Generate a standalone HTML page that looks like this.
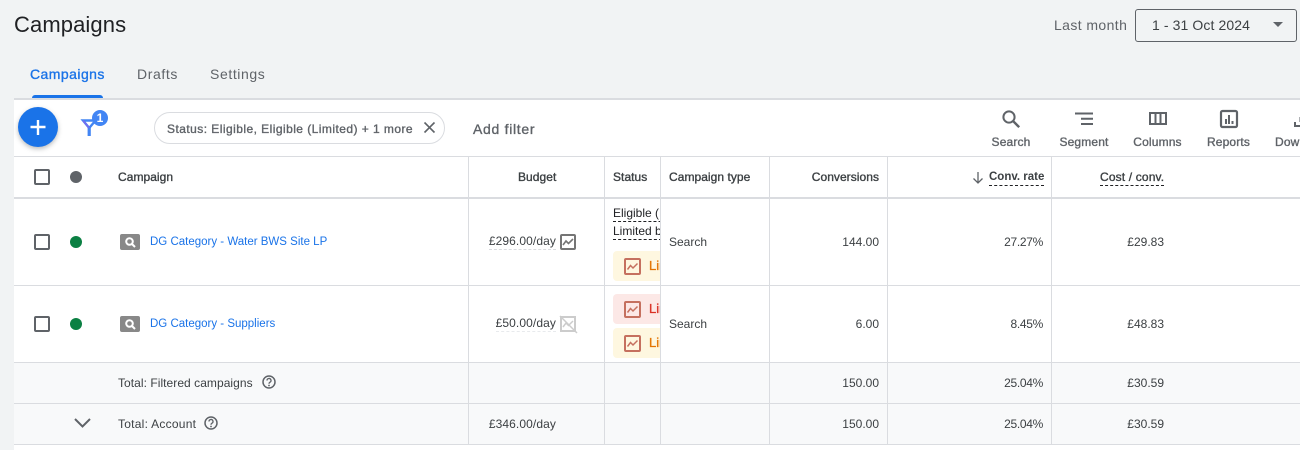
<!DOCTYPE html>
<html><head><meta charset="utf-8"><style>
html,body{margin:0;padding:0;width:1300px;height:450px;overflow:hidden;background:#f1f3f4;font-family:"Liberation Sans",sans-serif;color:#3c4043}
.t{position:absolute;white-space:nowrap;font-size:12px;line-height:16px}
.r{text-align:right}
.l{position:absolute;background:#dadce0}
.b{position:absolute}
svg{position:absolute;overflow:visible}
.cb{position:absolute;width:12px;height:12px;border:2px solid #5f6368;border-radius:2px;left:34px}
.dot{position:absolute;width:12px;height:12px;border-radius:50%;left:70px;background:#0b8043}
.h{-webkit-text-stroke:.35px #3c4043;color:#3c4043;letter-spacing:.05px}
.d{border-bottom:1px dashed #202124;line-height:15px}
.tb{color:#5f6368;transform:translateX(-50%);-webkit-text-stroke:.35px #5f6368;letter-spacing:.15px}
.p{letter-spacing:-.3px}
.m{letter-spacing:.1px}
</style></head><body>
<div class="t" style="left:14px;top:10px;font-size:22px;line-height:30px;color:#202124;letter-spacing:.1px">Campaigns</div>
<div class="t" style="left:30px;top:66px;font-size:14px;line-height:16px;color:#1a73e8;-webkit-text-stroke:.35px #1a73e8;letter-spacing:.45px">Campaigns</div>
<div class="t" style="left:137px;top:66px;font-size:14px;color:#5f6368;letter-spacing:.6px">Drafts</div>
<div class="t" style="left:210px;top:66px;font-size:14px;color:#5f6368;letter-spacing:.6px">Settings</div>
<div class="b" style="left:32px;top:95px;width:71px;height:3px;background:#1a73e8;border-radius:3px 3px 0 0"></div>
<div class="t" style="left:1054px;top:17px;font-size:14px;color:#5f6368;letter-spacing:.4px">Last month</div>
<div class="b" style="left:1135px;top:9px;width:160px;height:31px;border:1px solid #5f6368;border-radius:3px"></div>
<div class="t" style="left:1152px;top:17px;font-size:14px;color:#3c4043;letter-spacing:.1px">1 - 31 Oct 2024</div>
<svg style="left:1272px;top:22px" width="12" height="6"><path d="M1 0h10L6 5z" fill="#5f6368"/></svg>

<div class="b" style="left:14px;top:100px;width:1286px;height:350px;background:#fff"></div>
<div class="l" style="left:14px;top:98px;width:1286px;height:2px"></div>
<div class="l" style="left:14px;top:156px;width:1286px;height:1px"></div>
<div class="l" style="left:14px;top:197px;width:1286px;height:2px"></div>
<div class="b" style="left:14px;top:363px;width:1286px;height:81px;background:#f8f9fa"></div>
<div class="l" style="left:14px;top:285px;width:1286px;height:1px"></div>
<div class="l" style="left:14px;top:362px;width:1286px;height:1px"></div>
<div class="l" style="left:14px;top:403px;width:1286px;height:1px"></div>
<div class="l" style="left:14px;top:444px;width:1286px;height:1px"></div>
<div class="l" style="left:468px;top:157px;width:1px;height:288px"></div>
<div class="l" style="left:604px;top:157px;width:1px;height:288px"></div>
<div class="l" style="left:660px;top:157px;width:1px;height:288px"></div>
<div class="l" style="left:769px;top:157px;width:1px;height:288px"></div>
<div class="l" style="left:887px;top:157px;width:1px;height:288px"></div>
<div class="l" style="left:1051px;top:157px;width:1px;height:288px"></div>

<!-- toolbar -->
<div class="b" style="left:18px;top:107px;width:40px;height:40px;border-radius:50%;background:#1a73e8;box-shadow:0 2px 5px rgba(60,64,67,.35)"></div>
<svg style="left:30px;top:119px" width="16" height="16"><path d="M8 1v15M.5 8h15" stroke="#fff" stroke-width="2.400"/></svg>
<svg style="left:82px;top:119px" width="16" height="17"><path d="M1 1.500h12.500L7.200 9z" fill="none" stroke="#4285f4" stroke-width="2.400" stroke-linejoin="miter"/><path d="M7.200 8v9" stroke="#4285f4" stroke-width="3.200"/><path d="M1 1.500L7.200 9" stroke="#7b68ee" stroke-width="1.400"/></svg>
<div class="b" style="left:92px;top:110px;width:16px;height:16px;border-radius:50%;background:#4285f4;color:#fff;font-size:12px;font-weight:bold;line-height:16px;text-align:center">1</div>
<div class="b" style="left:154px;top:112px;width:289px;height:30px;border:1px solid #dadce0;border-radius:16px;background:#fff"></div>
<div class="t" style="left:167px;top:121px;font-size:12px;color:#5f6368;-webkit-text-stroke:.35px #5f6368;letter-spacing:.45px">Status: Eligible, Eligible (Limited) + 1 more</div>
<svg style="left:424px;top:122px" width="11" height="11"><path d="M.5.5l10 10M10.500.5l-10 10" stroke="#5f6368" stroke-width="1.600"/></svg>
<div class="t" style="left:473px;top:121px;font-size:14px;color:#5f6368;-webkit-text-stroke:.35px #5f6368;letter-spacing:.7px">Add filter</div>

<svg style="left:1001px;top:109px" width="20" height="20"><circle cx="8" cy="8" r="5.600" fill="none" stroke="#5f6368" stroke-width="2"/><path d="M12.200 12.200l6 6" stroke="#5f6368" stroke-width="2.400"/></svg>
<div class="t tb" style="left:1011px;top:134px">Search</div>
<svg style="left:1075px;top:112px" width="18" height="14"><path d="M0 1.500h18M6 6.800h12M6 12h12" stroke="#5f6368" stroke-width="2"/></svg>
<div class="t tb" style="left:1084px;top:134px">Segment</div>
<svg style="left:1149px;top:112px" width="18" height="13"><path d="M1 1h16v11H1z" fill="none" stroke="#5f6368" stroke-width="2"/><path d="M6.500 1v11M11.500 1v11" stroke="#5f6368" stroke-width="2"/></svg>
<div class="t tb" style="left:1157.500px;top:134px">Columns</div>
<svg style="left:1220px;top:110px" width="18" height="18"><rect x="1" y="1" width="16" height="16" rx="1.500" fill="none" stroke="#5f6368" stroke-width="2.200"/><path d="M5 9v5h2V9zM8 5v9h2V5zM11.500 11v3h2v-3z" fill="#5f6368"/></svg>
<div class="t tb" style="left:1228.500px;top:134px">Reports</div>
<svg style="left:1294px;top:116px" width="8" height="12"><path d="M1 6v4h7M6.500 1v5" fill="none" stroke="#5f6368" stroke-width="2"/></svg>
<div class="t" style="left:1275px;top:134px;color:#5f6368;-webkit-text-stroke:.35px #5f6368;letter-spacing:.15px">Down</div>

<!-- header -->
<div class="cb" style="top:169px"></div>
<div class="dot" style="top:171px;background:#5f6368"></div>
<div class="t h" style="left:118px;top:169px">Campaign</div>
<div class="t h" style="left:518px;top:169px">Budget</div>
<div class="t h" style="left:613px;top:169px">Status</div>
<div class="t h" style="left:669px;top:169px">Campaign type</div>
<div class="t h r" style="right:421px;top:169px">Conversions</div>
<svg style="left:972px;top:172px" width="12" height="12"><path d="M6 0v11M1.500 6.500L6 11l4.500-4.500" fill="none" stroke="#5f6368" stroke-width="1.300"/></svg>
<div class="t d" style="left:989px;top:170px;font-weight:bold;font-size:11.500px;color:#3c4043">Conv. rate</div>
<div class="t h d" style="left:1100px;top:170px;letter-spacing:.15px">Cost / conv.</div>

<!-- row 1 -->
<div class="cb" style="top:234px"></div>
<div class="dot" style="top:236px"></div>
<div class="b" style="left:120px;top:234px;width:20px;height:16px;background:#888;border-radius:2px"></div>
<svg style="left:124px;top:236px" width="12" height="12"><circle cx="5.500" cy="5.500" r="3.300" fill="none" stroke="#fff" stroke-width="2"/><path d="M8 8l3 3" stroke="#fff" stroke-width="2"/></svg>
<div class="t" style="left:150px;top:234px;color:#1a73e8;font-size:11.500px">DG Category - Water BWS Site LP</div>
<div class="t r m" style="right:744px;top:234px;border-bottom:1px dashed #dadce0;line-height:15px">£296.00/day</div>
<svg style="left:560px;top:234px" width="16" height="16"><rect x="1" y="1" width="14" height="14" rx="1" fill="none" stroke="#757575" stroke-width="2"/><path d="M3 11l3-4 2.500 2.500L13 5" fill="none" stroke="#757575" stroke-width="1.600"/></svg>
<div class="b" style="left:604px;top:199px;width:56px;height:86px;overflow:hidden">
<div class="t" style="left:9px;top:7px;color:#202124;border-bottom:1px dashed #202124;line-height:15px;height:15px">Eligible (Limited)</div>
<div class="t" style="left:9px;top:25px;color:#202124;border-bottom:1px dashed #202124;line-height:15px;height:15px">Limited by budget</div>
<div class="b" style="left:9px;top:52px;width:70px;height:30px;background:#fef7e0;border-radius:4px"></div>
<svg style="left:20px;top:59px" width="17" height="17"><rect x="1" y="1" width="15" height="15" rx="1" fill="none" stroke="#c5705f" stroke-width="2"/><path d="M3.500 11.500l3-4 2.500 2.500L13.500 5.500" fill="none" stroke="#c5705f" stroke-width="1.500"/></svg>
<div class="t" style="left:45px;top:59px;color:#e37400;-webkit-text-stroke:.35px #e37400;font-size:13px">Limited</div>
</div>
<div class="t" style="left:669px;top:234px">Search</div>
<div class="t r" style="right:421px;top:234px">144.00</div>
<div class="t r p" style="right:257px;top:234px">27.27%</div>
<div class="t r" style="right:136px;top:234px">£29.83</div>

<!-- row 2 -->
<div class="cb" style="top:316px"></div>
<div class="dot" style="top:318px"></div>
<div class="b" style="left:120px;top:316px;width:20px;height:16px;background:#888;border-radius:2px"></div>
<svg style="left:124px;top:318px" width="12" height="12"><circle cx="5.500" cy="5.500" r="3.300" fill="none" stroke="#fff" stroke-width="2"/><path d="M8 8l3 3" stroke="#fff" stroke-width="2"/></svg>
<div class="t" style="left:150px;top:316px;color:#1a73e8;font-size:11.500px">DG Category - Suppliers</div>
<div class="t r m" style="right:744px;top:316px;border-bottom:1px dashed #e8eaed;line-height:15px">£50.00/day</div>
<svg style="left:560px;top:316px" width="17" height="17"><path d="M1 1h14v14H1z" fill="none" stroke="#ccc" stroke-width="2"/><path d="M3 11l3-4 2.500 2.500L13 5M0 0l17 17" fill="none" stroke="#ccc" stroke-width="1.500"/></svg>
<div class="b" style="left:604px;top:286px;width:56px;height:76px;overflow:hidden">
<div class="b" style="left:9px;top:8px;width:70px;height:30px;background:#fce8e6;border-radius:4px"></div>
<svg style="left:20px;top:15px" width="17" height="17"><rect x="1" y="1" width="15" height="15" rx="1" fill="none" stroke="#c5705f" stroke-width="2"/><path d="M3.500 11.500l3-4 2.500 2.500L13.500 5.500" fill="none" stroke="#c5705f" stroke-width="1.500"/></svg>
<div class="t" style="left:45px;top:15px;color:#d93025;-webkit-text-stroke:.35px #d93025;font-size:13px">Limited</div>
<div class="b" style="left:9px;top:42px;width:70px;height:30px;background:#fef7e0;border-radius:4px"></div>
<svg style="left:20px;top:49px" width="17" height="17"><rect x="1" y="1" width="15" height="15" rx="1" fill="none" stroke="#c5705f" stroke-width="2"/><path d="M3.500 11.500l3-4 2.500 2.500L13.500 5.500" fill="none" stroke="#c5705f" stroke-width="1.500"/></svg>
<div class="t" style="left:45px;top:49px;color:#e37400;-webkit-text-stroke:.35px #e37400;font-size:13px">Limited</div>
</div>
<div class="t" style="left:669px;top:316px">Search</div>
<div class="t r" style="right:421px;top:316px">6.00</div>
<div class="t r p" style="right:257px;top:316px">8.45%</div>
<div class="t r" style="right:136px;top:316px">£48.83</div>

<!-- totals -->
<div class="t" style="left:118px;top:375px;font-size:12px;letter-spacing:.05px">Total: Filtered campaigns</div>
<svg style="left:262px;top:375px" width="14" height="14"><circle cx="7" cy="7" r="6" fill="none" stroke="#5f6368" stroke-width="1.500"/><path d="M5 5.500a2 2 0 1 1 3 1.700c-.7.400-1 .8-1 1.600" fill="none" stroke="#5f6368" stroke-width="1.300"/><circle cx="7" cy="10.500" r=".9" fill="#5f6368"/></svg>
<div class="t r" style="right:421px;top:375px">150.00</div>
<div class="t r p" style="right:257px;top:375px">25.04%</div>
<div class="t r" style="right:136px;top:375px">£30.59</div>
<svg style="left:74px;top:418px" width="17" height="10"><path d="M1 1l7.500 7.500L16 1" fill="none" stroke="#5f6368" stroke-width="2"/></svg>
<div class="t" style="left:118px;top:416px;font-size:12px;letter-spacing:.25px">Total: Account</div>
<svg style="left:204px;top:416px" width="14" height="14"><circle cx="7" cy="7" r="6" fill="none" stroke="#5f6368" stroke-width="1.500"/><path d="M5 5.500a2 2 0 1 1 3 1.700c-.7.400-1 .8-1 1.600" fill="none" stroke="#5f6368" stroke-width="1.300"/><circle cx="7" cy="10.500" r=".9" fill="#5f6368"/></svg>
<div class="t r m" style="right:744px;top:416px">£346.00/day</div>
<div class="t r" style="right:421px;top:416px">150.00</div>
<div class="t r p" style="right:257px;top:416px">25.04%</div>
<div class="t r" style="right:136px;top:416px">£30.59</div>
</body></html>
